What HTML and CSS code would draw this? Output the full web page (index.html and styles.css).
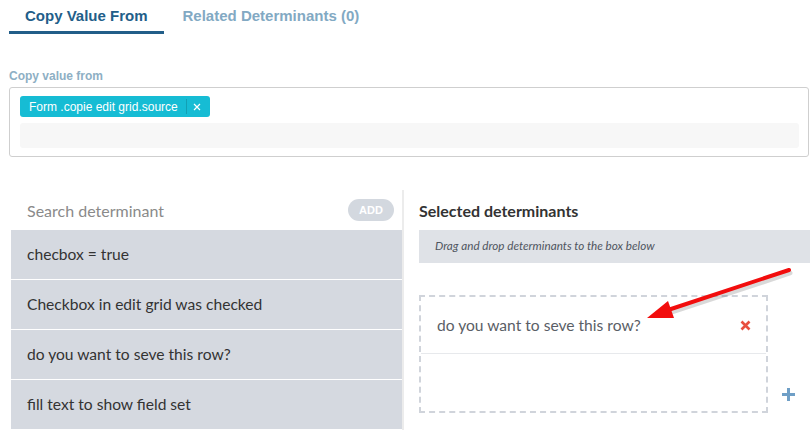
FILE: index.html
```html
<!DOCTYPE html>
<html lang="en">
<head>
    <meta charset="UTF-8">
    <meta name="viewport" content="width=device-width, initial-scale=1.0">
    <title>Determinant settings</title>
    <link rel="stylesheet" href="styles.css">
</head>
<body>
    <div class="tabs">
        <a class="tab active">Copy Value From</a>
        <a class="tab">Related Determinants (0)</a>
    </div>

    <div class="copy-from">
        <label class="field-label">Copy value from</label>
        <div class="tag-box">
            <span class="tag">
                Form .copie edit grid.source
                <span class="tag-remove">
                    <svg width="8" height="8" viewBox="0 0 8 8"><path d="M1 1L7 7M7 1L1 7" stroke="#fff" stroke-width="1.2"/></svg>
                </span>
            </span>
            <div class="tag-input"></div>
        </div>
    </div>

    <div class="determinants">
        <div class="available">
            <div class="search-row">
                <input type="text" class="search-input" placeholder="Search determinant">
                <button class="add-btn">ADD</button>
            </div>
            <ul class="det-list">
                <li>checbox = true</li>
                <li>Checkbox in edit grid was checked</li>
                <li>do you want to seve this row?</li>
                <li>fill text to show field set</li>
            </ul>
        </div>

        <div class="selected">
            <h3 class="selected-title">Selected determinants</h3>
            <div class="drop-hint">Drag and drop determinants to the box below</div>
            <div class="drop-area">
                <div class="drop-zone">
                    <div class="selected-item">
                        <span>do you want to seve this row?</span>
                        <svg class="remove" width="11" height="11" viewBox="0 0 11 11"><path d="M1.5 1.5L9.5 9.5M9.5 1.5L1.5 9.5" stroke="#e8503f" stroke-width="2.6"/></svg>
                    </div>
                </div>
                <svg class="add-more" width="13" height="13" viewBox="0 0 13 13"><path d="M6.5 0V13M0 6.5H13" stroke="#6f9fc6" stroke-width="3"/></svg>
            </div>
        </div>
    </div>

    <!-- red pointer arrow drawn over the drop zone -->
    <svg class="pointer" width="810" height="430" viewBox="0 0 810 430">
        <path d="M789 271L668 311" stroke="rgba(0,0,0,0.15)" stroke-width="5" stroke-linecap="round" transform="translate(1 2)"/>
        <path d="M789 270L668 310" stroke="#f20d0d" stroke-width="4" stroke-linecap="round"/>
        <polygon points="647,318 668,301 674,318" fill="#f20d0d"/>
    </svg>
</body>
</html>
```

FILE: styles.css
```css
/* styles for the determinant settings panel */
body {
    margin: 0;
    padding: 0;
    width: 810px;
    height: 430px;
    overflow: hidden;
    background-color: #fff;
    font-family: "Liberation Sans", Arial, sans-serif;
    position: relative;
}

/* Tabs */
.tabs {
    display: flex;
    padding-left: 9px;
    gap: 3px;
}

.tab {
    padding: 7px 16px 6px;
    font-size: 15px;
    line-height: 18px;
    font-weight: bold;
    color: #82a9c3;
    border-bottom: 3px solid transparent;
    cursor: pointer;
}

.tab.active {
    color: #225e89;
    border-bottom-color: #225e89;
}

/* Copy value from */
.copy-from {
    margin-top: 35px;
    padding-left: 9px;
}

.field-label {
    display: block;
    font-size: 12px;
    line-height: 14px;
    font-weight: bold;
    color: #8eafc4;
    margin-bottom: 4px;
}

.tag-box {
    width: 800px;
    box-sizing: border-box;
    border: 1px solid #cfcfcf;
    border-radius: 3px;
    padding: 8px 9px 8px 10px;
}

.tag {
    display: inline-flex;
    align-items: center;
    height: 21px;
    padding-left: 9px;
    background-color: #16bcd4;
    border-radius: 3px;
    color: #fff;
    font-size: 12px;
    vertical-align: top;
}

.tag-remove {
    display: flex;
    align-items: center;
    height: 15px;
    margin-left: 8px;
    padding: 0 9px 0 6px;
    border-left: 1px solid rgba(0, 0, 0, 0.15);
}

.tag-input {
    height: 25px;
    margin-top: 6px;
    background-color: #f7f7f7;
    border-radius: 3px;
}

/* Determinants */
.determinants {
    display: grid;
    grid-template-columns: 391px 1fr;
    margin-top: 33px;
    margin-left: 11px;
    font-family: Lato, "Liberation Sans", sans-serif;
}

.search-row {
    display: flex;
    align-items: center;
    height: 40px;
    padding: 0 8px 0 16px;
}

.search-input {
    flex: 1;
    border: none;
    outline: none;
    padding: 0;
    font-family: Lato, sans-serif;
    font-size: 16px;
    color: #333;
}

.search-input::placeholder {
    color: #8a8a8a;
}

.add-btn {
    width: 46px;
    height: 22px;
    border: none;
    border-radius: 11px;
    background-color: #d3d8df;
    color: #fff;
    font-family: "Liberation Sans", Arial, sans-serif;
    font-weight: bold;
    font-size: 11px;
    padding: 0;
}

.det-list {
    list-style: none;
    margin: 0;
    padding: 0;
}

.det-list li {
    height: 49px;
    line-height: 49px;
    padding-left: 16px;
    background-color: #d5d9e0;
    border-bottom: 1px solid #fff;
    font-size: 15.6px;
    color: #333;
}

.selected {
    border-left: 2px solid #ececec;
    padding-left: 15px;
}

.selected-title {
    margin: 0;
    height: 40px;
    line-height: 42px;
    font-size: 16px;
    font-weight: bold;
    color: #333;
}

.drop-hint {
    height: 33px;
    line-height: 31px;
    padding-left: 16px;
    background-color: #dfe2e7;
    font-size: 11.7px;
    font-style: italic;
    color: #4f5560;
}

.drop-area {
    display: flex;
    align-items: flex-end;
    margin-top: 32px;
}

.drop-zone {
    width: 349px;
    height: 118px;
    box-sizing: border-box;
    border: 2px dashed #d0d4db;
}

.selected-item {
    display: flex;
    align-items: center;
    justify-content: space-between;
    height: 56px;
    padding: 0 15px 0 16px;
    border-bottom: 1px solid #e7e9ec;
    font-size: 15.6px;
    color: #5a5e66;
}

.add-more {
    margin: 0 0 12px 14px;
}

.pointer {
    position: absolute;
    top: 0;
    left: 0;
    pointer-events: none;
}
```
